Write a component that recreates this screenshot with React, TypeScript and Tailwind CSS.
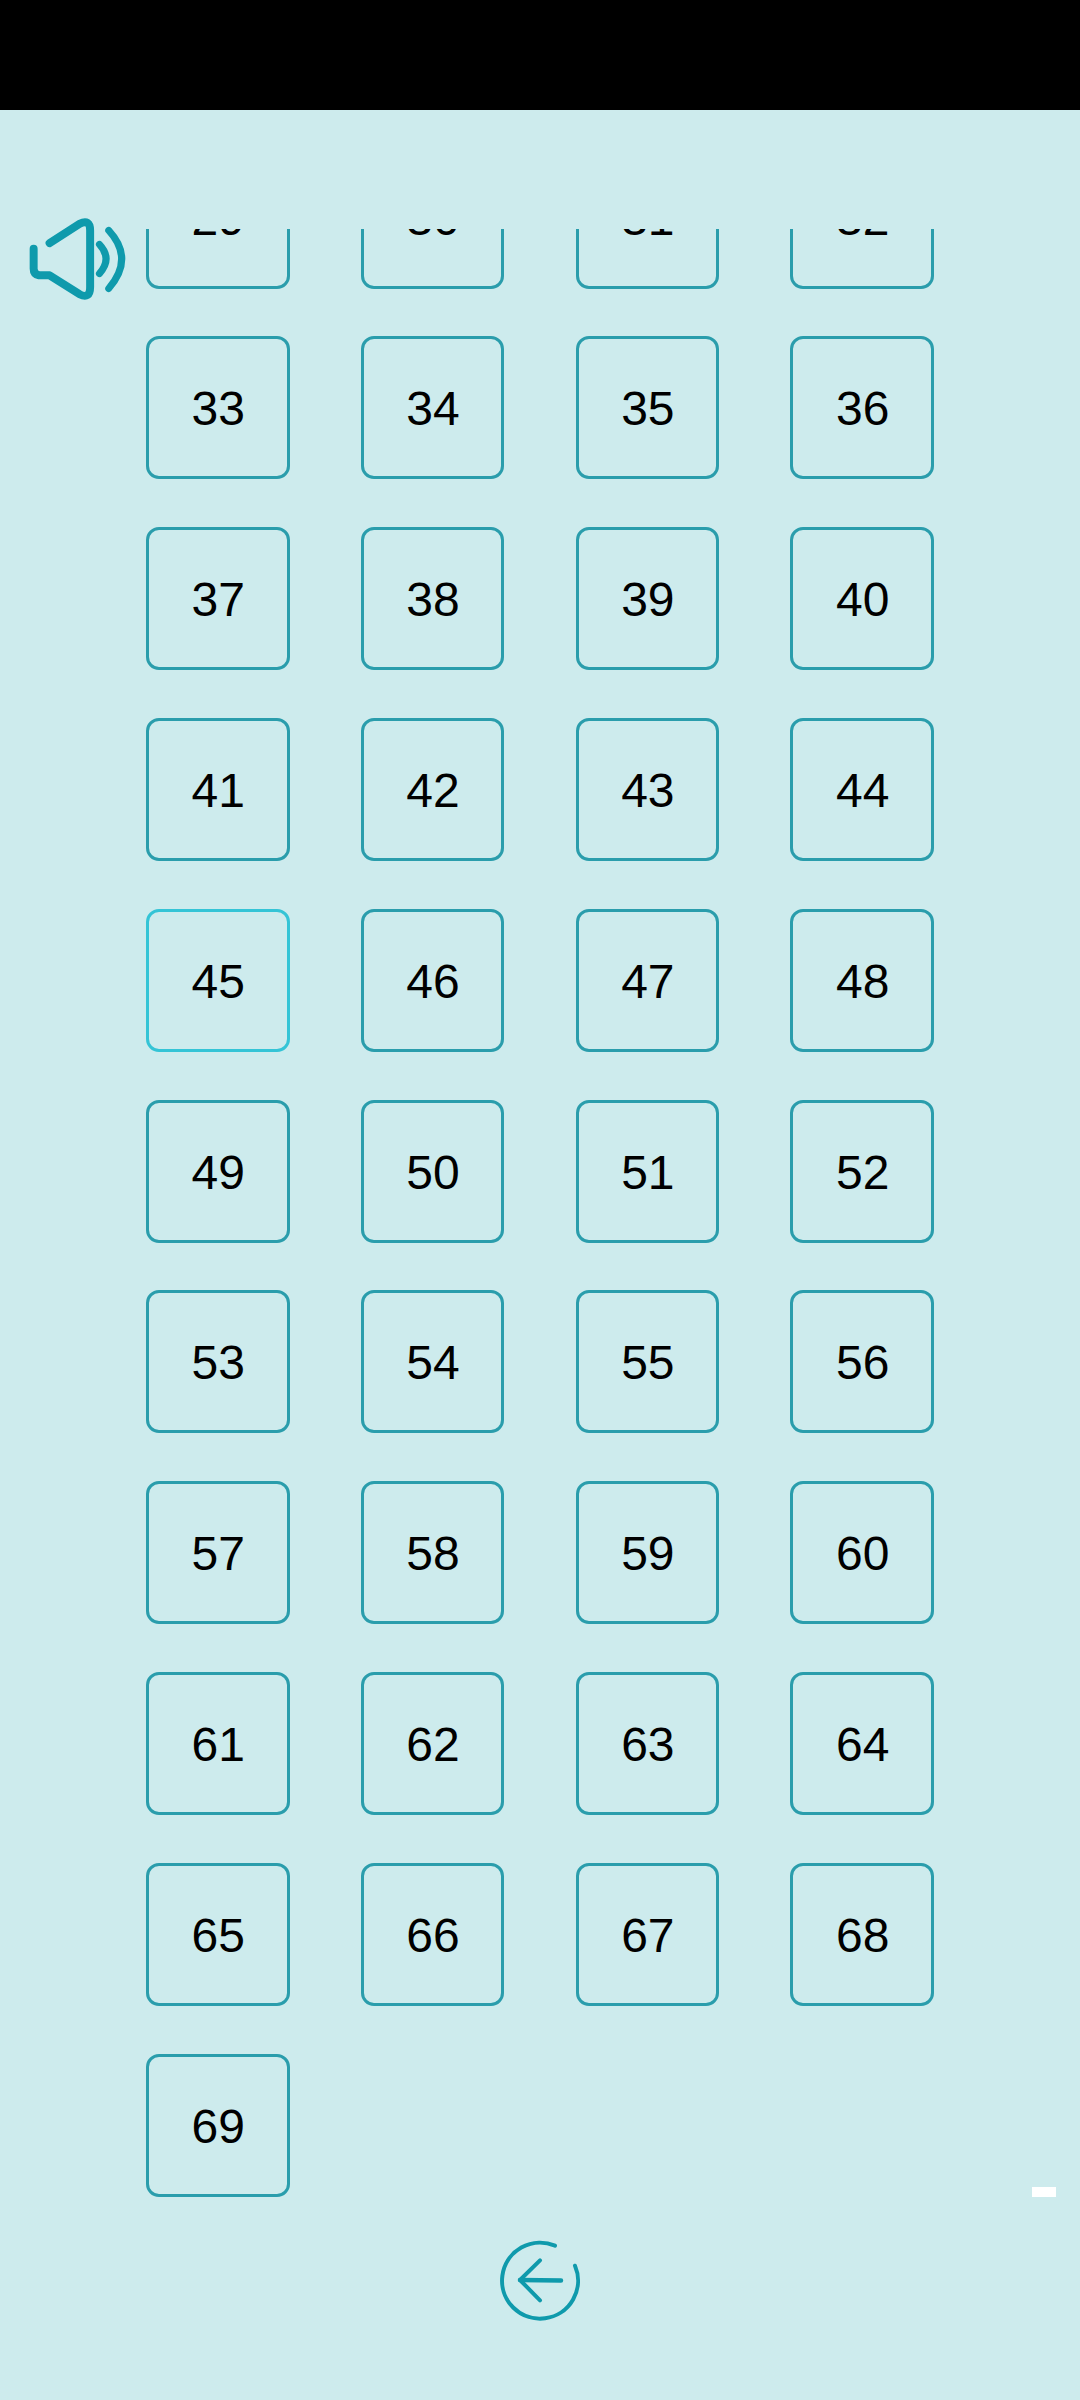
const numbers = Array.from({ length: 41 }, (_, i) => i + 29);

const SoundIcon = () => (
  <svg
    viewBox="85 380 295 255"
    fill="none"
    stroke="#0f9aac"
    strokeLinecap="round"
    strokeLinejoin="round"
    className="h-[85px] w-[98px]"
  >
    <path
      strokeWidth="24"
      d="M150 458 L240 400 Q272 385 272 420 L272 590 Q272 628 240 612 L150 555 L118 555 Q102 552 102 535 L102 475"
    />
    <path strokeWidth="21" d="M300 462 Q340 505 300 550" />
    <path strokeWidth="21" d="M328 420 Q406 505 328 595" />
  </svg>
);

const BackIcon = () => (
  <svg
    viewBox="0 0 88 88"
    fill="none"
    stroke="#0f9aac"
    strokeLinecap="round"
    strokeLinejoin="round"
    className="h-[88px] w-[88px]"
  >
    <path strokeWidth="4" d="M59 9.7 A38 38 0 1 0 79 29.7" />
    <path strokeWidth="4" d="M44 24.3 L24 44 L44 64.3" />
    <path strokeWidth="4.5" d="M24 44 L65 44.5" />
  </svg>
);

export default function App() {
  return (
    <div className="relative flex h-[2400px] w-[1080px] flex-col overflow-hidden bg-[#cdebed] font-['Liberation_Sans',Arial,sans-serif]">
      {/* Status bar */}
      <div className="h-[110px] w-full shrink-0 bg-black" />

      {/* Sound */}
      <div className="absolute left-[28px] top-[217px]">
        <SoundIcon />
      </div>

      {/* Number list, scrolled */}
      <div className="mt-[119px] h-[1981px] shrink-0 overflow-hidden pl-[146px]">
        <div className="-mt-[83.4px] grid grid-cols-[repeat(4,143.5px)] gap-x-[71.3px] gap-y-[47.8px]">
          {numbers.map((n) => (
            <button
              key={n}
              className={`flex h-[143px] w-[143.5px] items-center justify-center rounded-[13px] border-[3px] pl-[1px] pt-[3px] text-[48px] leading-none text-black ${
                n === 45 ? "border-[#34c4d6]" : "border-[#2a9dac]"
              }`}
            >
              {n}
            </button>
          ))}
        </div>
      </div>

      {/* Back */}
      <div className="flex justify-center pt-[26px]">
        <BackIcon />
      </div>

      {/* Scroll thumb */}
      <div className="absolute left-[1032px] top-[2187px] h-[10px] w-[24px] bg-white" />
    </div>
  );
}
